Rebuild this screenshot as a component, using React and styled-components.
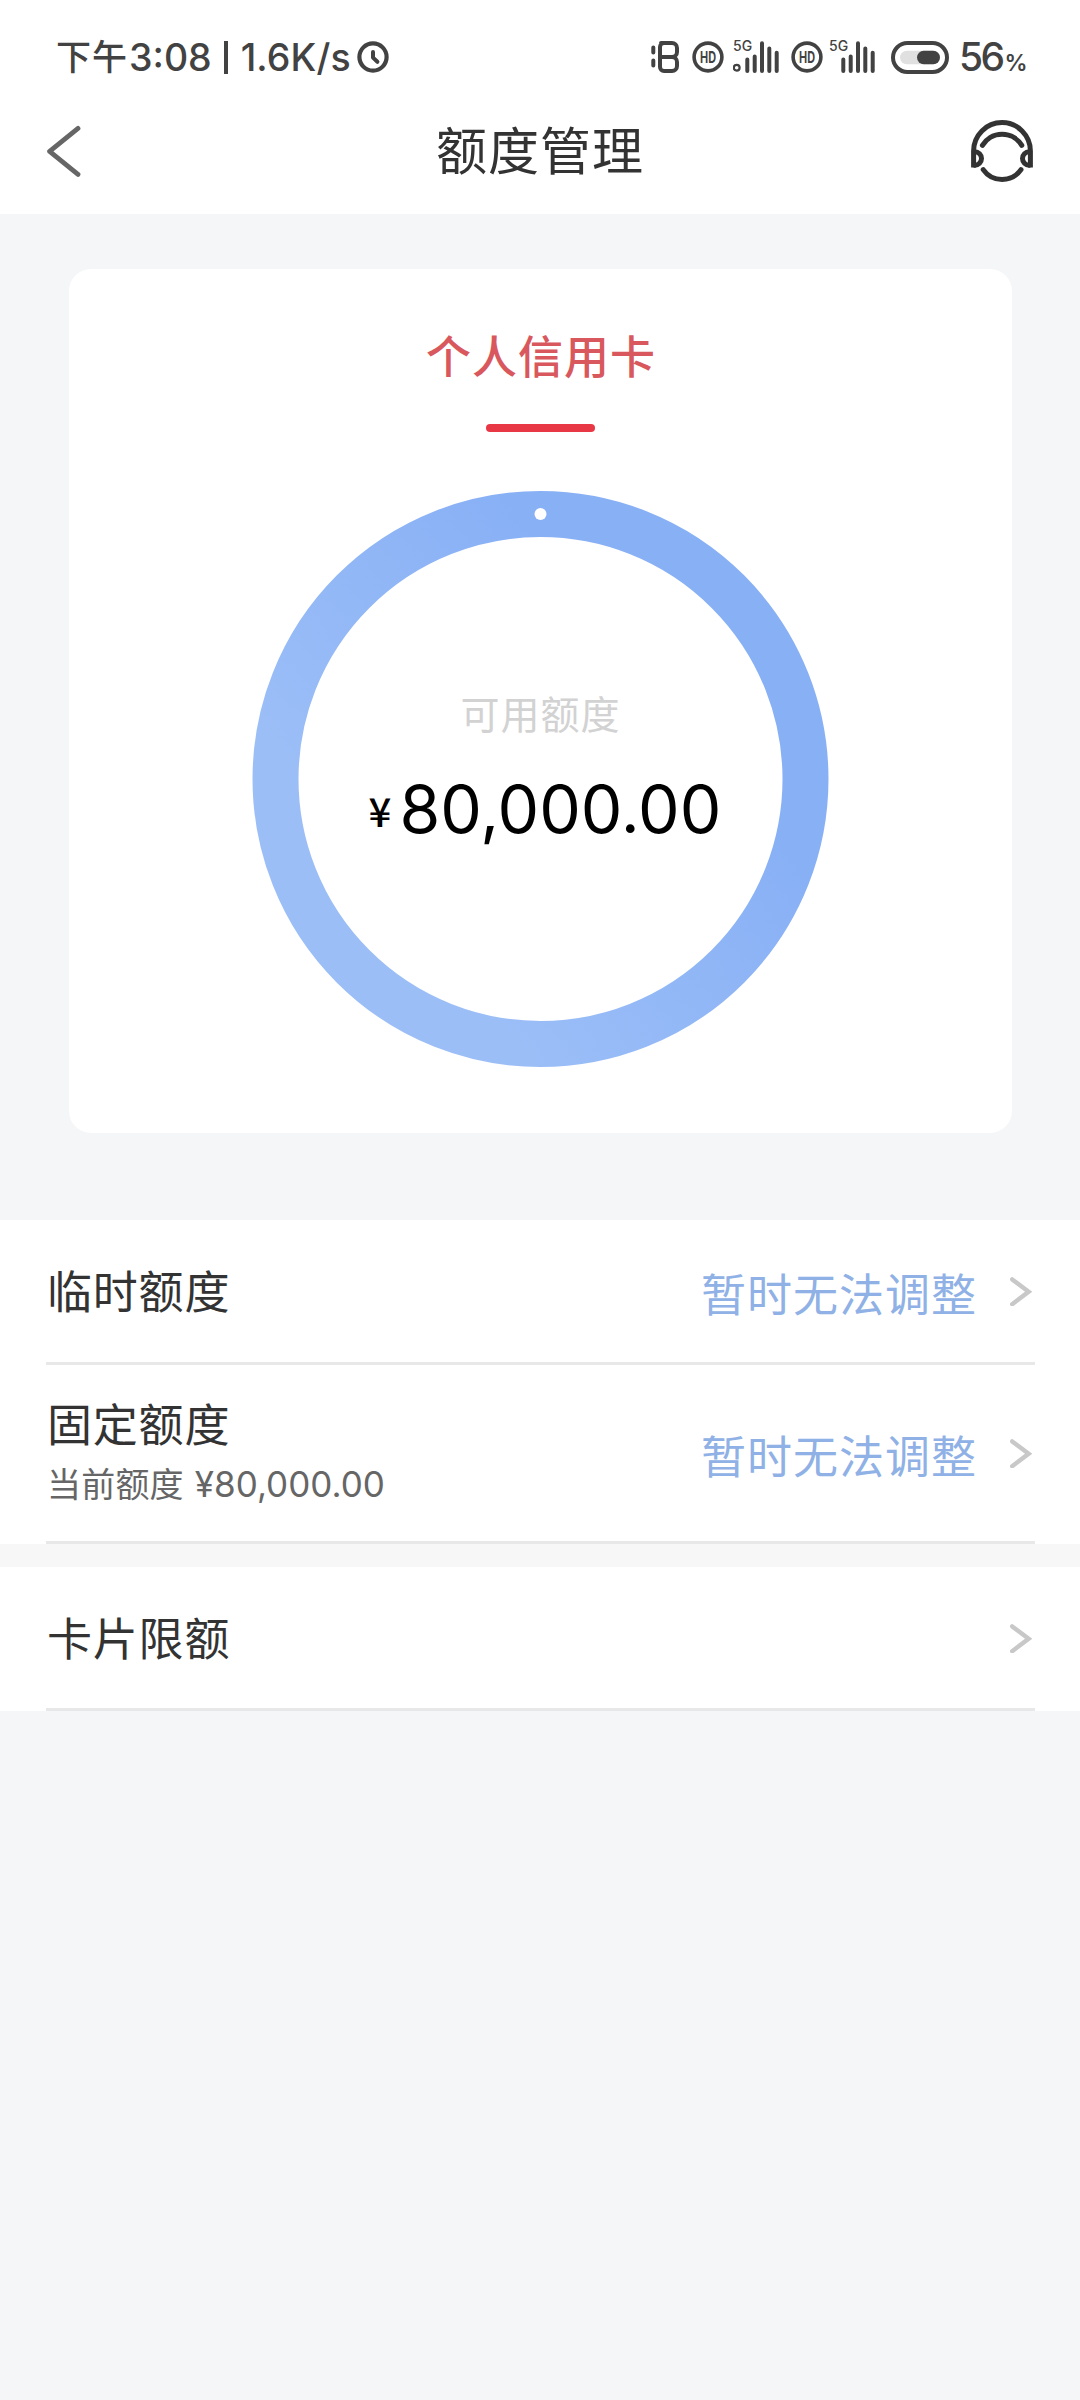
import React from 'react'
import styled, { createGlobalStyle } from 'styled-components'

const rows = [
    { title: '临时额度', status: '暂时无法调整', height: 145 },
    { title: '固定额度', sub: '当前额度', amount: '¥80,000.00', status: '暂时无法调整', height: 179 },
]

const ClockIcon = () => (
    <svg width="32" height="32" viewBox="0 0 32 32" fill="none" stroke="#424242">
        <circle cx="16" cy="16" r="13.6" strokeWidth="4.2" />
        <path d="M16 11v5.6l4.4 4.2" strokeWidth="4" strokeLinecap="round" strokeLinejoin="round" />
    </svg>
)

const BatchIcon = () => (
    <svg width="30" height="34" viewBox="0 0 30 34" fill="none" stroke="#424242" strokeWidth="4">
        <path d="M2.3 7.5v5M2.3 20.5v5" strokeLinecap="round" />
        <path d="M10 3h11a5 5 0 0 1 5 5v4a5 5 0 0 1-5 5h-11h11a5 5 0 0 1 5 5v4a5 5 0 0 1-5 5h-8a4 4 0 0 1-4-4V7a4 4 0 0 1 4-4z" strokeLinejoin="round" />
    </svg>
)

const HdIcon = () => (
    <svg width="32" height="32" viewBox="0 0 32 32">
        <circle cx="16" cy="16" r="13.9" fill="none" stroke="#424242" strokeWidth="3.6" />
        <text x="8" y="21.8" fontFamily="Inter, sans-serif" fontSize="16.5" fontWeight="700" fill="#424242" textLength="16" lengthAdjust="spacingAndGlyphs">HD</text>
    </svg>
)

const SignalIcon = ({ roaming }) => (
    <svg width="46" height="38" viewBox="0 -4 46 38">
        <text x="0" y="11" fontFamily="Inter, sans-serif" fontSize="14" fontWeight="500" fill="#424242">5G</text>
        {roaming && <circle cx="3.7" cy="27.7" r="2.9" fill="none" stroke="#424242" strokeWidth="2.2" />}
        <path
            d="M14.3 19.5v11.4M21.7 16.5v14.4M29 3.2v27.7M36.3 8.5v22.4M43.7 12.8v18.1"
            fill="none" stroke="#424242" strokeWidth="4" strokeLinecap="round" />
    </svg>
)

const BatteryIcon = () => (
    <svg width="58" height="33" viewBox="0 0 58 33">
        <rect x="2" y="2" width="54" height="29" rx="14.5" fill="none" stroke="#424242" strokeWidth="4" />
        <rect x="9" y="9.8" width="40" height="13.4" rx="6.7" fill="#e0e0e0" />
        <rect x="26" y="9.8" width="23" height="13.4" rx="6.7" fill="#424242" />
    </svg>
)

const BackIcon = () => (
    <svg width="36" height="52" viewBox="0 0 36 52">
        <path d="M32 3.4L3.6 26.4L32 49.4" fill="none" stroke="#666" strokeWidth="4.8" strokeLinecap="round" strokeLinejoin="round" />
    </svg>
)

const HeadsetIcon = () => (
    <svg width="62" height="62" viewBox="0 0 62 62" fill="none" stroke="#333" strokeWidth="5">
        <path d="M2.6 47.6V31a28.4 28.4 0 0 1 56.8 0v16.6" />
        <path d="M2.6 31.8h1.2a6.7 6.7 0 0 1 0 13.4h-1.2M59.4 31.8h-1.2a6.7 6.7 0 0 0 0 13.4h1.2" />
        <path d="M11.4 25.4a23 23 0 0 1 39.4 0M12.2 49.6a23 23 0 0 0 37.8 0" strokeLinecap="round" />
    </svg>
)

const ArrowIcon = () => (
    <svg width="22" height="30" viewBox="0 0 22 30">
        <path d="M2.2 3.4L18.6 15.8L2.2 28.2" fill="none" stroke="#c8c8c8" strokeWidth="4.4" strokeLinecap="round" />
    </svg>
)

const RingChart = () => (
    <svg width="577" height="576" viewBox="0 0 576 576">
        <defs>
            <linearGradient id="ring" x1="0.75" y1="0.35" x2="0.25" y2="0.75">
                <stop offset="0" stopColor="#88b0f5" />
                <stop offset="1" stopColor="#9bbef7" />
            </linearGradient>
        </defs>
        <circle cx="288" cy="288" r="265" fill="none" stroke="url(#ring)" strokeWidth="46" />
        <circle cx="288" cy="23" r="6" fill="#fff" />
    </svg>
)

const App = () => {
    return (
        <Page>
            <GlobalStyle />
            <StatusBar>
                <Clock>
                    <ClockPeriod>下午</ClockPeriod>
                    <span>3:08</span>
                    <ClockDivider />
                    <Speed>1.6K/s</Speed>
                </Clock>
                <ClockIcon />
                <StatusIcons>
                    <BatchIcon />
                    <HdIcon />
                    <SignalIcon roaming />
                    <HdIcon />
                    <SignalIcon />
                    <BatteryIcon />
                </StatusIcons>
                <Battery>56<small>%</small></Battery>
            </StatusBar>
            <NavBar>
                <BackIcon />
                <NavTitle>额度管理</NavTitle>
                <HeadsetIcon />
            </NavBar>
            <Card>
                <Tab>个人信用卡</Tab>
                <TabLine />
                <Ring>
                    <RingChart />
                    <RingText>
                        <RingLabel>可用额度</RingLabel>
                        <Amount><Currency>¥</Currency>80,000.00</Amount>
                    </RingText>
                </Ring>
            </Card>
            <List>
                {rows.map((row) => (
                    <Row key={row.title} height={row.height}>
                        <RowMain>
                            <RowTitle>{row.title}</RowTitle>
                            {row.sub && <RowSub>{row.sub}<span>{row.amount}</span></RowSub>}
                        </RowMain>
                        <RowStatus>{row.status}</RowStatus>
                        <ArrowIcon />
                    </Row>
                ))}
            </List>
            <Gap />
            <List>
                <Row height={144}>
                    <RowMain>
                        <RowTitle>卡片限额</RowTitle>
                    </RowMain>
                    <ArrowIcon />
                </Row>
            </List>
        </Page>
    )
}

const GlobalStyle = createGlobalStyle`
    * {
        box-sizing: border-box;
    }
    body {
        margin: 0;
        background: #f4f6f8;
        font-family: 'Noto Sans CJK SC', sans-serif;
    }
    svg {
        display: block;
        flex-shrink: 0;
    }
`;

const Page = styled.div`
    width: 1080px;
    min-height: 2400px;
    background: #f4f6f8;
    color: #333;
`;

const StatusBar = styled.div`
    display: flex;
    align-items: center;
    height: 114px;
    padding: 0 55px 0 56px;
    background: #fff;
    color: #424242;
`;

const Clock = styled.div`
    display: flex;
    align-items: center;
    width: 301px;
    padding-top: 2px;
    font: 500 37.5px/50px Inter, sans-serif;
    white-space: nowrap;
`;

const ClockPeriod = styled.span`
    width: 73px;
    padding-bottom: 6px;
    font: 500 35px/50px 'Noto Sans CJK SC', sans-serif;
    letter-spacing: 1px;
`;

const ClockDivider = styled.i`
    width: 4px;
    height: 33px;
    margin: 0 13px 2px 12px;
    background: #424242;
`;

const Speed = styled.span`
    letter-spacing: 0.1px;
`;

const StatusIcons = styled.div`
    display: flex;
    align-items: center;
    margin-left: auto;

    svg:nth-child(2) {
        margin-left: 11px;
    }
    svg:nth-child(3) {
        margin: -4px 0 0 9px;
    }
    svg:nth-child(4) {
        margin-left: 12px;
    }
    svg:nth-child(5) {
        margin: -4px 0 0 6px;
    }
    svg:nth-child(6) {
        margin-left: 16px;
    }
`;

const Battery = styled.div`
    width: 66px;
    margin-left: 10px;
    padding-top: 5px;
    font: 500 39px/50px Inter, sans-serif;
    letter-spacing: -2.6px;
    white-space: nowrap;

    small {
        margin-left: 2px;
        font-size: 23px;
        font-weight: 600;
    }
`;

const NavBar = styled.div`
    display: flex;
    align-items: center;
    justify-content: space-between;
    height: 100px;
    padding: 0 47px 27px 46px;
    background: #fff;
`;

const NavTitle = styled.h1`
    margin: -6px 0 0 27px;
    font-size: 51px;
    font-weight: 400;
    line-height: 72px;
    letter-spacing: 1px;
`;

const Card = styled.div`
    display: flex;
    flex-direction: column;
    align-items: center;
    width: 943px;
    height: 864px;
    margin: 55px 68px 87px 69px;
    padding-top: 52px;
    border-radius: 22px;
    background: #fff;
`;

const Tab = styled.div`
    padding-left: 1px;
    font-size: 45px;
    font-weight: 500;
    line-height: 68px;
    letter-spacing: 1px;
    color: #d9585d;
`;

const TabLine = styled.div`
    width: 109px;
    height: 8px;
    margin: 35px 0 59px;
    border-radius: 4px;
    background: #e93845;
`;

const Ring = styled.div`
    display: grid;

    > * {
        grid-area: 1 / 1;
    }
`;

const RingText = styled.div`
    display: flex;
    flex-direction: column;
    align-items: center;
    padding-top: 191px;
`;

const RingLabel = styled.div`
    font-size: 39px;
    line-height: 60px;
    letter-spacing: 1px;
    color: #d2d2d2;
`;

const Amount = styled.div`
    display: flex;
    align-items: center;
    margin-top: 27px;
    padding-left: 9px;
    font: 400 66px/80px Inter, sans-serif;
    color: #000;
    white-space: nowrap;
`;

const Currency = styled.span`
    margin: 2px 8px 0 0;
    font: 500 40px/40px 'Noto Sans CJK SC', sans-serif;
`;

const List = styled.div`
    padding: 0 45px 0 46px;
    background: #fff;
`;

const Row = styled.div`
    display: flex;
    align-items: center;
    height: ${({height}) => height}px;
    padding-right: 3px;
    border-bottom: 3px solid #e8e8e8;
`;

const RowMain = styled.div`
    flex: 1;
    padding: 0 0 2px 1px;
`;

const RowTitle = styled.div`
    font-size: 45px;
    line-height: 66px;
    letter-spacing: 0.8px;
`;

const RowSub = styled.div`
    margin-bottom: 4px;
    font-size: 34px;
    line-height: 54px;
    letter-spacing: 0.2px;
    color: #666;

    span {
        margin-left: 11px;
        font: 400 35px/50px Inter, sans-serif;
        letter-spacing: 0;
    }
`;

const RowStatus = styled.div`
    margin-right: 33px;
    padding-top: 3px;
    font-size: 45px;
    line-height: 66px;
    letter-spacing: 1px;
    color: #8fb1e6;
`;

const Gap = styled.div`
    height: 23px;
    background: #f7f7f7;
`;

export default App
